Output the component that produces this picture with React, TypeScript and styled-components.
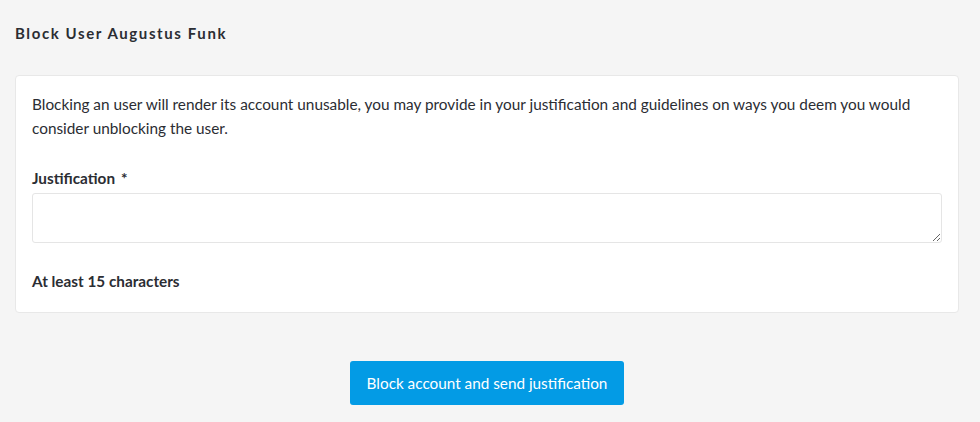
import React from "react";
import styled, { createGlobalStyle } from "styled-components";

const GlobalStyle = createGlobalStyle`
    html, body {
        margin: 0;
        padding: 0;
        background: #f5f5f5;
        font-family: Lato, "Noto Sans", sans-serif;
        color: #2b2d33;
    }
`;

const Page = styled.div`
    padding: 0 21px 0 15px;
    display: flex;
    flex-direction: column;
`;

const Title = styled.h1`
    margin: 23px 0 0;
    font-size: 15px;
    font-weight: 700;
    letter-spacing: 1.6px;
    line-height: 20px;
`;

const Card = styled.div`
    margin-top: 32px;
    background: #fff;
    border: 1px solid #e8e8e8;
    border-radius: 4px;
    padding: 16px 16px 21px;
`;

const Intro = styled.p`
    margin: 0;
    font-size: 15.35px;
    line-height: 24px;
`;

const Label = styled.label`
    display: block;
    margin-top: 28px;
    font-size: 15.3px;
    font-weight: 700;
    line-height: 20px;

    & span {
        margin-left: 6px;
    }
`;

const TextArea = styled.textarea`
    display: block;
    box-sizing: border-box;
    width: 100%;
    height: 50px;
    margin-top: 5px;
    border: 1px solid #e5e5e5;
    border-radius: 3px;
    padding: 6px 10px;
    font: inherit;
    outline: none;
`;

const Hint = styled.div`
    margin-top: 28px;
    font-size: 15.3px;
    font-weight: 700;
    line-height: 20px;
`;

const Actions = styled.div`
    display: flex;
    justify-content: center;
    margin-top: 48px;
`;

const Button = styled.button`
    height: 44px;
    padding: 0 17px;
    border: none;
    border-radius: 3px;
    background: #039be5;
    color: #fff;
    font-family: inherit;
    font-size: 15.3px;
    cursor: pointer;
`;

const App: React.FC = () => {
    return (
        <>
            <GlobalStyle />
            <Page>
                <Title>Block User Augustus Funk</Title>
                <Card>
                    <Intro>
                        Blocking an user will render its account unusable, you may provide in your justification and
                        guidelines on ways you deem you would consider unblocking the user.
                    </Intro>
                    <Label htmlFor="justification">
                        Justification<span>*</span>
                    </Label>
                    <TextArea id="justification" />
                    <Hint>At least 15 characters</Hint>
                </Card>
                <Actions>
                    <Button>Block account and send justification</Button>
                </Actions>
            </Page>
        </>
    );
};

export default App;
